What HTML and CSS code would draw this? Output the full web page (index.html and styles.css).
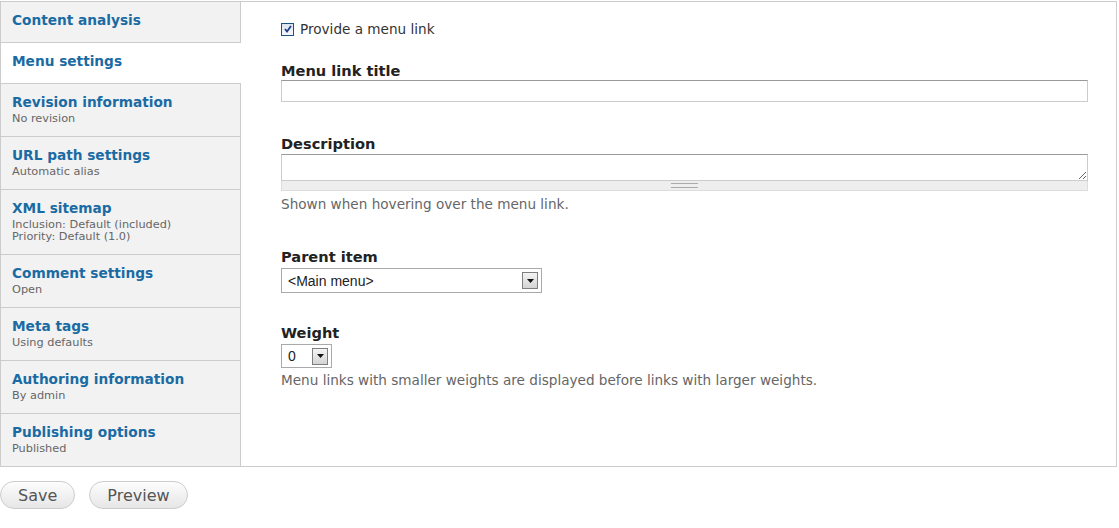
FILE: index.html
```html
<!DOCTYPE html>
<html lang="en">
<head>
    <meta charset="UTF-8">
    <title>Menu settings</title>
    <link rel="stylesheet" href="styles.css">
</head>
<body>
    <div class="vertical-tabs">
        <ul class="tabs-list">
            <li class="tab"><a class="tab-title" href="#">Content analysis</a></li>
            <li class="tab active"><a class="tab-title" href="#">Menu settings</a></li>
            <li class="tab"><a class="tab-title" href="#">Revision information</a><span class="summary">No revision</span></li>
            <li class="tab"><a class="tab-title" href="#">URL path settings</a><span class="summary">Automatic alias</span></li>
            <li class="tab"><a class="tab-title" href="#">XML sitemap</a><span class="summary">Inclusion: Default (included)<br>Priority: Default (1.0)</span></li>
            <li class="tab"><a class="tab-title" href="#">Comment settings</a><span class="summary">Open</span></li>
            <li class="tab"><a class="tab-title" href="#">Meta tags</a><span class="summary">Using defaults</span></li>
            <li class="tab"><a class="tab-title" href="#">Authoring information</a><span class="summary">By admin</span></li>
            <li class="tab"><a class="tab-title" href="#">Publishing options</a><span class="summary">Published</span></li>
        </ul>

        <div class="pane">
            <div class="form-item item-check">
                <span class="checkbox">
                    <svg width="8" height="8" viewBox="0 0 8 8"><path d="M1 4 L3 6.5 L7 1" fill="none" stroke="#1d3f8a" stroke-width="1.8"/></svg>
                </span>
                <label class="option">Provide a menu link</label>
            </div>

            <div class="form-item item-title">
                <label class="field-label">Menu link title</label>
                <input class="text-input" type="text">
            </div>

            <div class="form-item item-desc">
                <label class="field-label">Description</label>
                <div class="textarea-wrap">
                    <textarea class="textarea"></textarea>
                    <div class="grippie"><span class="grip"></span></div>
                </div>
                <div class="description">Shown when hovering over the menu link.</div>
            </div>

            <div class="form-item item-parent">
                <label class="field-label">Parent item</label>
                <div class="select select-wide">
                    <span class="select-value">&lt;Main menu&gt;</span>
                    <span class="select-arrow"><svg width="7" height="4" viewBox="0 0 7 4"><path d="M0 0 H7 L3.5 4 Z" fill="#111"/></svg></span>
                </div>
            </div>

            <div class="form-item item-weight">
                <label class="field-label">Weight</label>
                <div class="select select-small">
                    <span class="select-value">0</span>
                    <span class="select-arrow"><svg width="7" height="4" viewBox="0 0 7 4"><path d="M0 0 H7 L3.5 4 Z" fill="#111"/></svg></span>
                </div>
                <div class="description">Menu links with smaller weights are displayed before links with larger weights.</div>
            </div>
        </div>
    </div>

    <div class="form-actions">
        <button class="button">Save</button>
        <button class="button">Preview</button>
    </div>
</body>
</html>
```

FILE: styles.css
```css
body {
    font-family: "DejaVu Sans", Verdana, sans-serif;
    font-size: 13.6px;
    color: #333;
    margin: 0;
    padding: 0;
    background: #fff;
}

.vertical-tabs {
    display: flex;
    margin: 1px 2px 0 0;
    border: 1px solid #ccc;
}

/* left list of tabs */
.tabs-list {
    list-style: none;
    margin: 0;
    padding: 0;
    width: 239px;
    flex: none;
    background: #f2f2f2;
    border-right: 1px solid #ccc;
}
.tab {
    display: block;
    padding: 9px 11px 0 11px;
    height: 31px;
    border-bottom: 1px solid #ccc;
}
.tab:has(.summary) {
    height: 43px;
}
.tab:nth-child(5) {
    height: 55px;
}
.tab:last-child {
    border-bottom: 0;
}
.tab.active {
    background: #fff;
    margin-right: -1px;
}
.tab-title {
    display: block;
    font-weight: bold;
    font-size: 13.7px;
    line-height: 19px;
    color: #1a6ba3;
    text-decoration: none;
}
.summary {
    display: block;
    margin-top: 1px;
    font-size: 11.3px;
    line-height: 12px;
    color: #666;
}

/* right pane */
.pane {
    flex: 1;
    padding: 18px 28px 0 40px;
    min-height: 446px;
}
.form-item {
    display: block;
}
.item-check {
    display: flex;
    align-items: center;
    gap: 6px;
    line-height: 18px;
}
.checkbox {
    width: 11px;
    height: 11px;
    border: 1px solid #1c5180;
    background: linear-gradient(#dde4ee, #f6f8fb);
    display: flex;
    align-items: center;
    justify-content: center;
}
.option {
    color: #333;
}
.field-label {
    display: block;
    font-weight: bold;
    font-size: 14.6px;
    line-height: 19px;
    color: #222;
}
.item-title {
    margin-top: 23px;
}
.text-input {
    display: block;
    box-sizing: border-box;
    width: 100%;
    height: 22px;
    margin: 0;
    border: 1px solid #ccc;
    border-top-color: #999;
    padding: 0 4px;
}
.item-desc {
    margin-top: 32px;
}
.textarea-wrap {
    margin-top: 1px;
}
.textarea {
    display: block;
    box-sizing: border-box;
    width: 100%;
    height: 27px;
    margin: 0;
    border: 1px solid #ccc;
    border-top-color: #999;
    resize: vertical;
}
.grippie {
    height: 9px;
    background: #eee;
    border: 1px solid #ddd;
    border-top: 0;
    display: flex;
    align-items: center;
    justify-content: center;
}
.grip {
    width: 27px;
    height: 3px;
    border-top: 1px solid #aaa;
    border-bottom: 1px solid #aaa;
}
.description {
    color: #666;
    line-height: 18px;
    margin-top: 4px;
}
.item-parent {
    margin-top: 34px;
}
.select {
    box-sizing: border-box;
    display: flex;
    align-items: center;
    justify-content: space-between;
    margin-top: 2px;
    border: 1px solid #a9a9a9;
    background: #fff;
    font-family: "Liberation Sans", Arial, sans-serif;
    font-size: 14px;
    color: #222;
    padding: 0 3px 0 6px;
}
.select-wide {
    width: 261px;
    height: 25px;
}
.select-small {
    width: 51px;
    height: 24px;
}
.select-arrow {
    box-sizing: border-box;
    width: 16px;
    height: 17px;
    border: 1px solid #7f7f7f;
    background: linear-gradient(#f4f4f4, #d4d4d4);
    display: flex;
    align-items: center;
    justify-content: center;
}
.item-weight {
    margin-top: 30px;
}
.item-weight .description {
    margin-top: 3px;
}

/* buttons under the box */
.form-actions {
    display: flex;
    gap: 14px;
    padding-top: 14px;
}
.button {
    height: 28px;
    padding: 0 17px;
    border: 1px solid #ccc;
    border-radius: 14px;
    background: linear-gradient(#fdfdfd, #e6e6e6);
    font-family: "DejaVu Sans", Verdana, sans-serif;
    font-size: 16px;
    color: #555;
}
```
